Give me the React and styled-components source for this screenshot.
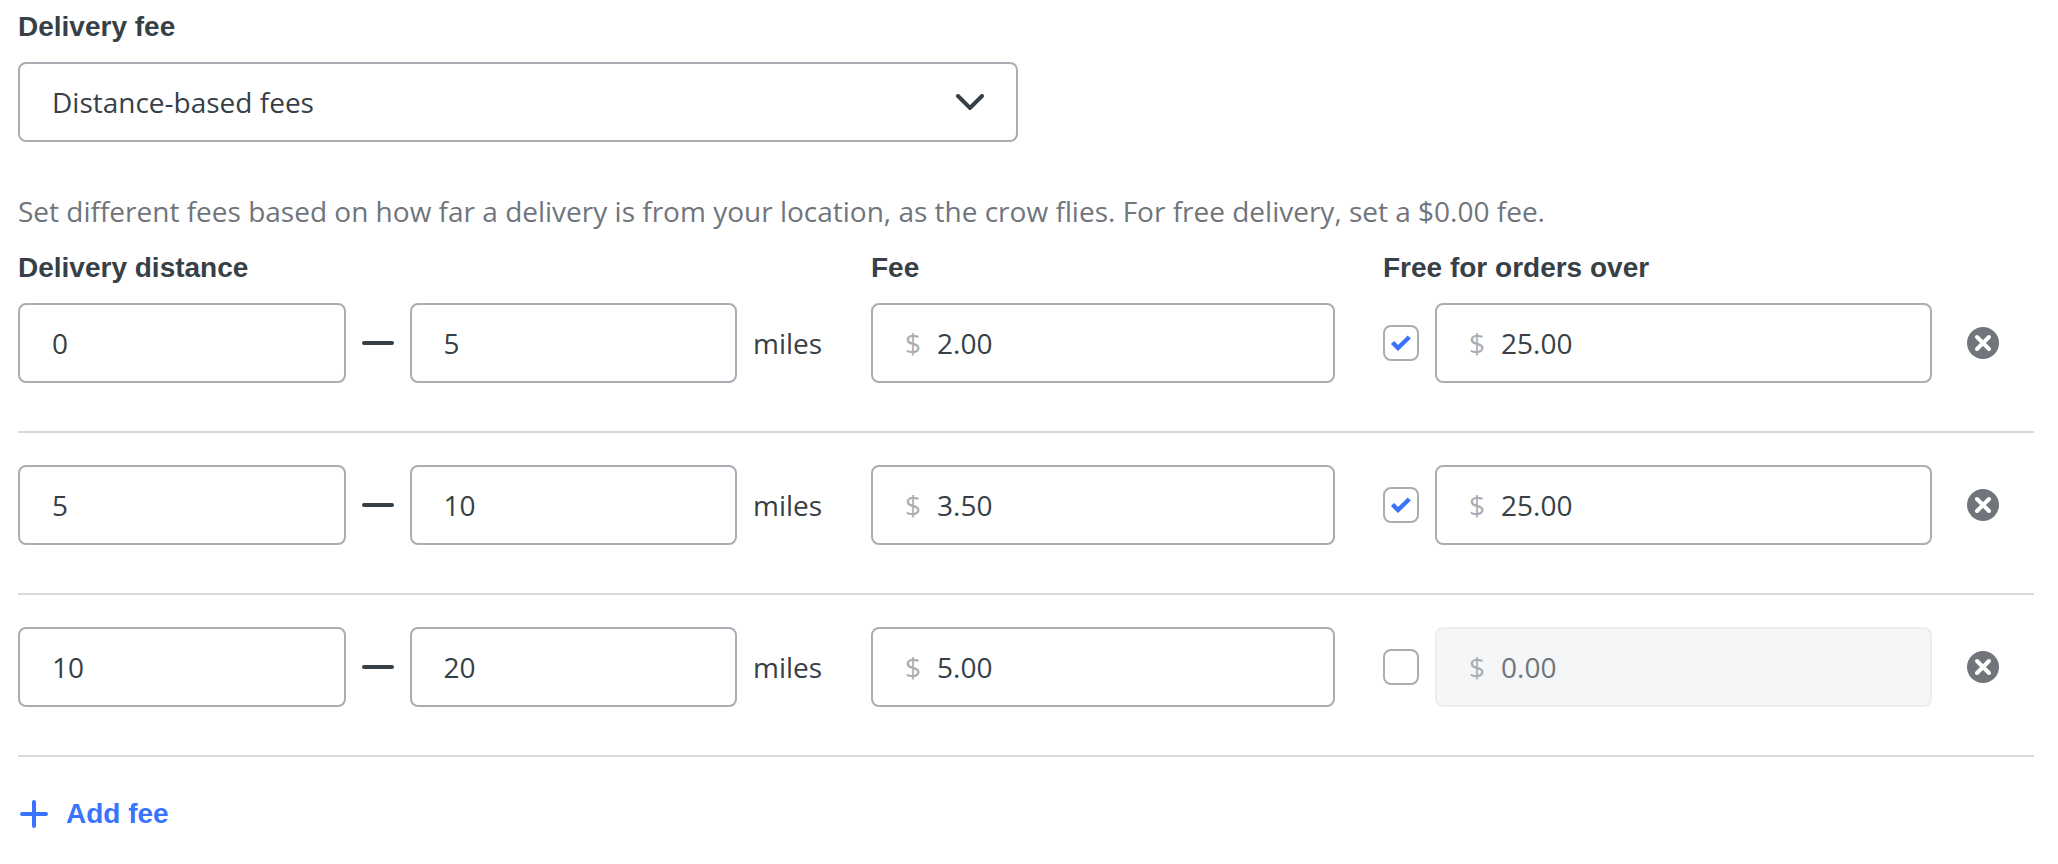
import React, { useState } from 'react';
import styled, { createGlobalStyle } from 'styled-components';

const headingFont = "'Liberation Sans', Arial, sans-serif";

const GlobalStyle = createGlobalStyle`
  *, *::before, *::after {
    box-sizing: border-box;
  }

  body {
    margin: 0;
    background: #ffffff;
    color: #373f47;
    font-family: 'Open Sans', 'Noto Sans', sans-serif;
    font-size: 28px;
    line-height: 32px;
  }

  input, select, button {
    font: inherit;
    color: inherit;
  }
`;

const Form = styled.form`
  padding: 11px 24px 34px 18px;
`;

const Label = styled.label`
  display: block;
  margin-bottom: 19px;
  font-family: ${headingFont};
  font-weight: 700;
`;

const SelectWrapper = styled.div`
  position: relative;
  width: 50%;
  min-width: 320px;
  max-width: 1000px;

  svg {
    position: absolute;
    top: 32px;
    right: 34px;
    pointer-events: none;
  }
`;

const Select = styled.select`
  display: block;
  width: 100%;
  height: 80px;
  padding: 0 80px 0 32px;
  appearance: none;
  background: #ffffff;
  border: 2px solid #a9aeb4;
  border-radius: 8px;
`;

const Description = styled.p`
  margin: 53px 0 25px;
  color: #70757c;
`;

const Columns = styled.div`
  flex: 1;
  display: grid;
  grid-template-columns: minmax(0, 805fr) minmax(0, 464fr) minmax(0, 549fr);
  column-gap: 48px;
`;

const Header = styled.div`
  display: flex;
  padding-right: 102px;
  margin-bottom: 19px;
  font-family: ${headingFont};
  font-weight: 700;
`;

const FeeList = styled.ul`
  display: grid;
  gap: 32px;
  margin: 0;
  padding: 0;
  list-style: none;
`;

const FeeRow = styled.li`
  display: flex;
  padding-bottom: 48px;
  border-bottom: 2px solid #d5d9dd;
`;

const Cell = styled.div`
  display: flex;
  align-items: center;
  gap: 16px;
`;

const Dash = styled.span`
  flex: none;
  width: 32px;
  height: 4px;
  border-radius: 2px;
  background: #373f47;
`;

const Unit = styled.span`
  flex: none;
  width: 70px;
`;

const Field = styled.div`
  flex: 1;
  min-width: 0;
  display: flex;
  align-items: center;
  gap: 16px;
  height: 80px;
  padding: 0 32px;
  background: ${({ $disabled }) => ($disabled ? '#f4f6f8' : '#ffffff')};
  border: 2px solid ${({ $disabled }) => ($disabled ? '#ebedef' : '#a9aeb4')};
  border-radius: 8px;
  color: ${({ $disabled }) => ($disabled ? '#70757c' : '#373f47')};

  &:focus-within {
    border-color: #3973ff;
  }
`;

const Prefix = styled.span`
  color: #a9aeb4;
`;

const Input = styled.input`
  flex: 1;
  min-width: 0;
  padding: 0;
  border: none;
  outline: none;
  background: transparent;
`;

const CheckboxWrapper = styled.span`
  position: relative;
  flex: none;
  width: 36px;
  height: 36px;

  svg {
    position: absolute;
    inset: 0;
    pointer-events: none;
  }
`;

const Checkbox = styled.input`
  display: block;
  width: 36px;
  height: 36px;
  margin: 0;
  appearance: none;
  background: #ffffff;
  border: 2px solid #a9aeb4;
  border-radius: 8px;
  cursor: pointer;
`;

const RemoveButton = styled.button`
  flex: none;
  display: flex;
  align-items: center;
  justify-content: center;
  width: 102px;
  padding: 0;
  border: none;
  background: none;
  cursor: pointer;
`;

const AddButton = styled.button`
  display: flex;
  align-items: center;
  gap: 16px;
  margin-top: 41px;
  padding: 0;
  border: none;
  background: none;
  color: #3973ff;
  font-family: ${headingFont};
  font-weight: 700;
  cursor: pointer;
`;

const ChevronIcon = () => (
  <svg width="28" height="16" viewBox="0 0 28 16" fill="none" aria-hidden="true">
    <path d="M2 2L14 14L26 2" stroke="#373f47" strokeWidth="4" strokeLinecap="round" />
  </svg>
);

const CheckIcon = () => (
  <svg width="36" height="36" viewBox="0 0 36 36" fill="none" aria-hidden="true">
    <path d="M9.5 17.5L15 23L26.3 12" stroke="#3973ff" strokeWidth="4.4" />
  </svg>
);

const RemoveIcon = () => (
  <svg width="32" height="32" viewBox="0 0 32 32" fill="none" aria-hidden="true">
    <circle cx="16" cy="16" r="16" fill="#70757c" />
    <path d="M10 10L22 22M22 10L10 22" stroke="#ffffff" strokeWidth="4" strokeLinecap="round" />
  </svg>
);

const PlusIcon = () => (
  <svg width="32" height="32" viewBox="0 0 32 32" fill="none" aria-hidden="true">
    <path d="M16 4V28M4 16H28" stroke="#3973ff" strokeWidth="4" strokeLinecap="round" />
  </svg>
);

const initialFees = [
  { id: 1, from: '0', to: '5', fee: '2.00', free: true, over: '25.00' },
  { id: 2, from: '5', to: '10', fee: '3.50', free: true, over: '25.00' },
  { id: 3, from: '10', to: '20', fee: '5.00', free: false, over: '0.00' },
];

function App() {
  const [fees, setFees] = useState(initialFees);

  const update = (id, name, value) => {
    setFees(fees.map((fee) => (fee.id === id ? { ...fee, [name]: value } : fee)));
  };

  const addFee = () => {
    const last = fees[fees.length - 1];
    setFees([
      ...fees,
      { id: Date.now(), from: last ? last.to : '0', to: '', fee: '0.00', free: false, over: '0.00' },
    ]);
  };

  const removeFee = (id) => {
    setFees(fees.filter((fee) => fee.id !== id));
  };

  return (
    <>
      <GlobalStyle />
      <Form onSubmit={(e) => e.preventDefault()}>
        <Label htmlFor="delivery-fee">Delivery fee</Label>
        <SelectWrapper>
          <Select id="delivery-fee" defaultValue="distance">
            <option value="distance">Distance-based fees</option>
          </Select>
          <ChevronIcon />
        </SelectWrapper>

        <Description>
          Set different fees based on how far a delivery is from your location, as the crow flies.
          For free delivery, set a $0.00 fee.
        </Description>

        <Header>
          <Columns>
            <span id="distance-label">Delivery distance</span>
            <span id="fee-label">Fee</span>
            <span id="over-label">Free for orders over</span>
          </Columns>
        </Header>

        <FeeList>
          {fees.map((row) => (
            <FeeRow key={row.id}>
              <Columns>
                <Cell>
                  <Field>
                    <Input
                      aria-labelledby="distance-label"
                      value={row.from}
                      onChange={(e) => update(row.id, 'from', e.target.value)}
                    />
                  </Field>
                  <Dash />
                  <Field>
                    <Input
                      aria-labelledby="distance-label"
                      value={row.to}
                      onChange={(e) => update(row.id, 'to', e.target.value)}
                    />
                  </Field>
                  <Unit>miles</Unit>
                </Cell>
                <Cell>
                  <Field>
                    <Prefix>$</Prefix>
                    <Input
                      aria-labelledby="fee-label"
                      value={row.fee}
                      onChange={(e) => update(row.id, 'fee', e.target.value)}
                    />
                  </Field>
                </Cell>
                <Cell>
                  <CheckboxWrapper>
                    <Checkbox
                      type="checkbox"
                      aria-labelledby="over-label"
                      checked={row.free}
                      onChange={(e) => update(row.id, 'free', e.target.checked)}
                    />
                    {row.free && <CheckIcon />}
                  </CheckboxWrapper>
                  <Field $disabled={!row.free}>
                    <Prefix>$</Prefix>
                    <Input
                      aria-labelledby="over-label"
                      value={row.over}
                      disabled={!row.free}
                      onChange={(e) => update(row.id, 'over', e.target.value)}
                    />
                  </Field>
                </Cell>
              </Columns>
              <RemoveButton type="button" aria-label="Remove fee" onClick={() => removeFee(row.id)}>
                <RemoveIcon />
              </RemoveButton>
            </FeeRow>
          ))}
        </FeeList>

        <AddButton type="button" onClick={addFee}>
          <PlusIcon />
          Add fee
        </AddButton>
      </Form>
    </>
  );
}

export default App;
